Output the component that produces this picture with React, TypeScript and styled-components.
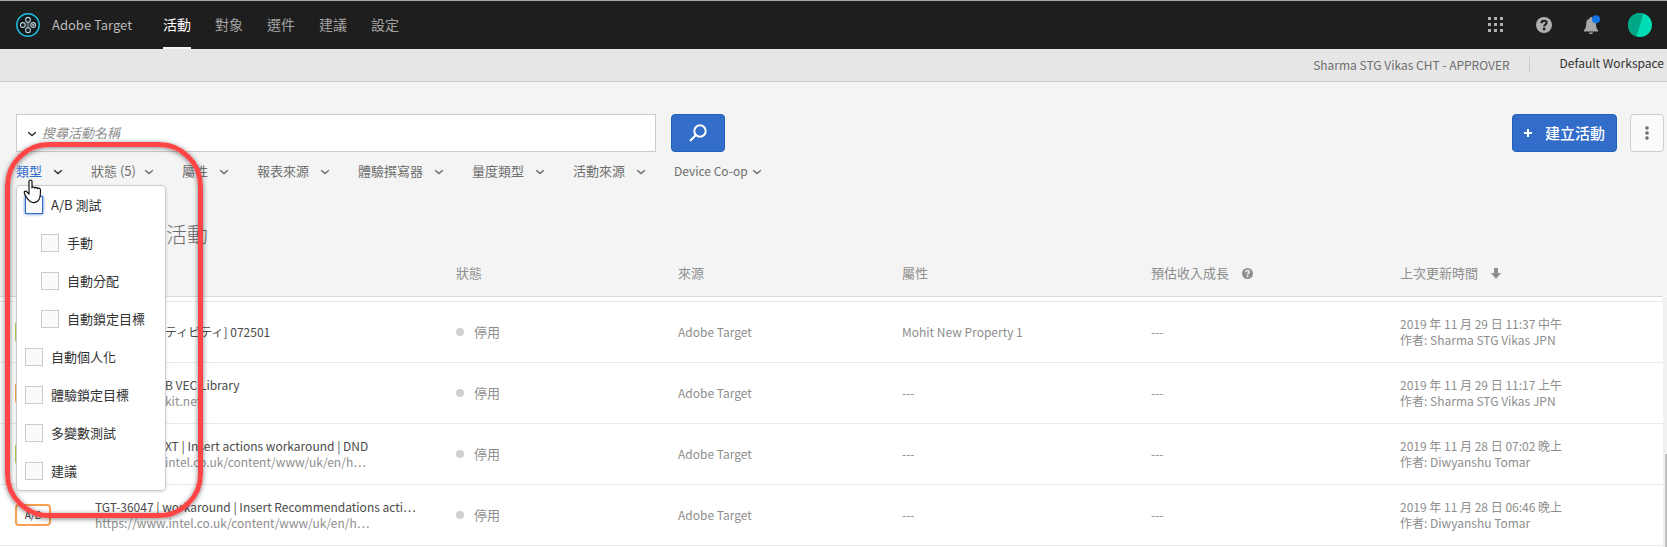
import React from "react";
import styled, { createGlobalStyle } from "styled-components";

const GlobalStyle = createGlobalStyle`
  *, *::before, *::after { box-sizing: border-box; }
  body {
    margin: 0;
    background: #fff;
    color: #4b4b4b;
    font-family: "Noto Sans CJK TC", "Noto Sans CJK JP", sans-serif;
    font-size: 13px;
    line-height: 16px;
  }
  button, input { font: inherit; color: inherit; }
`;

const Page = styled.div`
  position: relative;
  display: flex;
  flex-direction: column;
  min-height: 100vh;
  overflow: hidden;
`;

const TopBar = styled.header`
  display: flex;
  align-items: center;
  justify-content: space-between;
  height: 49px;
  padding: 0 15px 0 16px;
  border-top: 1px solid #a5a9a8;
  background: #1e1e1e;
`;

const Brand = styled.a`
  display: flex;
  align-items: center;
  gap: 12px;
  color: #b9b9b9;
  font-size: 13px;
  text-decoration: none;
`;

const TopLeft = styled.div`
  display: flex;
  align-items: center;
  height: 100%;
  gap: 31px;
`;

const MainNav = styled.nav`
  display: flex;
  height: 100%;
  gap: 24px;
`;

const NavLink = styled.a<{ $active?: boolean }>`
  display: flex;
  align-items: center;
  height: 100%;
  border-bottom: 2px solid ${(p) => (p.$active ? "#f4f4f4" : "transparent")};
  color: ${(p) => (p.$active ? "#fff" : "#a3a3a3")};
  font-size: 14px;
  text-decoration: none;
`;

const Tools = styled.div`
  display: flex;
  align-items: center;
  gap: 28px;
`;

const ToolIcons = styled.div`
  display: flex;
  align-items: center;
  gap: 32px;
`;

const IconButton = styled.button`
  display: flex;
  padding: 0;
  border: 0;
  background: none;
`;

const WorkspaceBar = styled.div`
  display: flex;
  align-items: center;
  justify-content: flex-end;
  height: 33px;
  padding-right: 3px;
  border-bottom: 1px solid #ccc;
  background: #e6e6e6;
  font-size: 12px;
`;

const Account = styled.span`
  padding-right: 19px;
  border-right: 1px solid #ccc;
  color: #6e6e6e;
`;

const Workspace = styled.span`
  padding: 0 0 4px 30px;
  color: #323232;
`;

const Controls = styled.main`
  display: flex;
  flex-direction: column;
  padding: 32px 3px 0 16px;
  background: #f4f4f4;
`;

const SearchRow = styled.form`
  display: flex;
  align-items: center;
  gap: 15px;
`;

const SearchBox = styled.label`
  display: flex;
  align-items: center;
  gap: 5px;
  flex: 0 1 640px;
  height: 38px;
  padding: 0 10px;
  border: 1px solid #ccc;
  background: #fff;
`;

const SearchInput = styled.input`
  flex: 1;
  min-width: 0;
  padding: 0;
  border: 0;
  outline: 0;
  background: none;
  &::placeholder {
    color: #8e8e8e;
    font-style: italic;
    opacity: 1;
  }
`;

const PrimaryButton = styled.button`
  display: flex;
  align-items: center;
  justify-content: center;
  gap: 13px;
  min-width: 54px;
  height: 38px;
  padding: 0 11px;
  border: 1px solid #2260bf;
  border-radius: 4px;
  background: #326dc9;
  color: #fff;
  font-size: 15px;
  font-weight: 500;
`;

const MoreButton = styled.button`
  display: flex;
  align-items: center;
  justify-content: center;
  width: 34px;
  height: 38px;
  padding: 0;
  border: 1px solid #ccc;
  border-radius: 4px;
  background: #fafafa;
`;

const PageActions = styled.div`
  display: flex;
  gap: 13px;
  margin-left: auto;
`;

const FilterRow = styled.div`
  display: flex;
  align-items: center;
  gap: 28px;
  height: 38px;
`;

const FilterItem = styled.div`
  position: relative;
`;

const FilterButton = styled.button<{ $open?: boolean; $gap: number; $small?: boolean }>`
  display: flex;
  align-items: center;
  gap: ${(p) => p.$gap}px;
  padding: 0;
  border: 0;
  background: none;
  color: ${(p) => (p.$open ? "#326dc9" : "#6e6e6e")};
  font-size: ${(p) => (p.$small ? "12px" : "13px")};
  white-space: nowrap;
`;

const Menu = styled.fieldset`
  position: absolute;
  z-index: 2;
  top: 22px;
  left: 0;
  width: 150px;
  height: 306px;
  margin: 0;
  padding: 0;
  border: 1px solid #ccc;
  border-radius: 4px;
  background: #fff;
  box-shadow: 0 1px 3px rgba(0, 0, 0, 0.15);
`;

const Option = styled.label<{ $sub?: boolean }>`
  display: flex;
  align-items: center;
  gap: 8px;
  height: 38px;
  padding-left: ${(p) => (p.$sub ? "24px" : "8px")};
  color: #323232;
`;

const Tick = styled.input<{ $focused?: boolean }>`
  appearance: none;
  width: 18px;
  height: 18px;
  margin: 0;
  border: 1px solid ${(p) => (p.$focused ? "#326dc9" : "#ccc")};
  background: #fafafa;
  box-shadow: ${(p) => (p.$focused ? "0 0 3px #326dc9" : "none")};
`;

const Heading = styled.h1`
  margin: 0;
  padding: 27px 0 3px 150px;
  color: #6e6e6e;
  font-size: 21px;
  font-weight: 300;
  line-height: 32px;
`;

const ListArea = styled.div`
  display: flex;
  flex: 1;
  background: linear-gradient(#f4f4f4 44px, #fff 44px);
`;

const Table = styled.table`
  flex: 1;
  align-self: flex-start;
  width: 100%;
  table-layout: fixed;
  border-spacing: 0;
  text-align: left;
`;

const HeadCell = styled.th`
  height: 45px;
  padding: 0 0 2px;
  border-bottom: 1px solid #dcdcdc;
  background: #f4f4f4;
  color: #8e8e8e;
  font-weight: 400;
`;

const HeadLabel = styled.span`
  display: inline-flex;
  align-items: center;
  gap: 13px;
`;

const Spacer = styled.td`
  height: 5px;
  padding: 0;
  border-bottom: 1px solid #eaeaea;
`;

const Cell = styled.td`
  height: 61px;
  padding: 0;
  border-bottom: 1px solid #eaeaea;
  color: #8e8e8e;
  font-size: 12px;
  white-space: nowrap;
`;

const NameLayout = styled.div`
  display: flex;
  align-items: center;
  gap: 44px;
  padding-left: 15px;
`;

const Badge = styled.span<{ $color: string }>`
  width: 36px;
  height: 22px;
  border: 2px solid ${(p) => p.$color};
  border-radius: 4px;
  color: #323232;
  font-size: 10px;
  line-height: 18px;
  text-align: center;
`;

const NameText = styled.div<{ $indent: number }>`
  padding-left: ${(p) => p.$indent}px;
`;

const Name = styled.div`
  color: #4b4b4b;
`;

const Status = styled.span`
  display: flex;
  align-items: center;
  gap: 10px;
  font-size: 13px;
  &::before {
    content: "";
    width: 8px;
    height: 8px;
    border-radius: 50%;
    background: #d0d0d0;
  }
`;

const ScrollTrack = styled.div`
  display: flex;
  align-items: flex-end;
  justify-content: flex-end;
  width: 4px;
  margin-top: 45px;
  background: #f1f1f1;
`;

const ScrollThumb = styled.div`
  width: 2px;
  height: 93px;
  background: #c1c1c1;
`;

const Callout = styled.div`
  position: absolute;
  z-index: 3;
  top: 142px;
  left: 5px;
  width: 198px;
  height: 376px;
  border: 5px solid #ff4545;
  border-radius: 44px;
  box-shadow: 0 1px 5px rgba(0, 0, 0, 0.5), inset 0 1px 5px rgba(0, 0, 0, 0.5);
  pointer-events: none;
`;

const Pointer = styled.svg`
  position: absolute;
  z-index: 4;
  top: 179px;
  left: 23px;
  pointer-events: none;
`;

const Chevron = ({ color = "#6e6e6e" }: { color?: string }) => (
  <svg width="10" height="8" viewBox="0 0 10 8" fill="none" aria-hidden="true">
    <path d="M1.2 3.200 5 6.600 8.800 3.200" stroke={color} strokeWidth="1.5" />
  </svg>
);

const Logo = () => (
  <svg width="24" height="24" viewBox="0 0 24 24" fill="none" aria-hidden="true">
    <circle cx="12" cy="12" r="11.2" fill="#12191b" stroke="#1fc0e0" strokeWidth="1.4" />
    <path d="M12 9v6" stroke="#5f6c70" strokeWidth="3" />
    <g stroke="#bcd0d6" strokeWidth="1.1">
      <circle cx="12" cy="6.8" r="2.4" />
      <circle cx="12" cy="17.200" r="2.4" />
      <circle cx="6.800" cy="12" r="2.4" />
      <circle cx="17.200" cy="12" r="2.4" />
    </g>
    <circle cx="17.200" cy="12" r="1.100" fill="#bcd0d6" />
  </svg>
);

const GridIcon = () => (
  <svg width="16" height="16" viewBox="0 0 16 16" fill="#b0b0b0" aria-hidden="true">
    {[0, 6, 12].map((y) => [0, 6, 12].map((x) => <rect key={`${x}-${y}`} x={x} y={y} width="3" height="3" />))}
  </svg>
);

const HelpIcon = ({ size, fill, mark }: { size: number; fill: string; mark: string }) => (
  <svg width={size} height={size} viewBox="0 0 16 16" aria-hidden="true">
    <circle cx="8" cy="8" r="8" fill={fill} />
    <path d="M5.4 6.2C5.500 4.500 6.600 3.700 8.100 3.700c1.500 0 2.500.8 2.500 2.100 0 1.700-2.400 1.700-2.400 3.600" fill="none" stroke={mark} strokeWidth="2.100" />
    <circle cx="8.100" cy="12" r="1.400" fill={mark} />
  </svg>
);

const BellIcon = () => (
  <svg width="16" height="20" viewBox="0 0 16 20" aria-hidden="true">
    <path d="M5.800 3.500c0-2 2.800-2 2.800 0C11 4.200 12 6 12 8.500c0 3.500.5 5.500 2 6.500v1.500H0V15c1.500-1 2.200-3 2.200-6.500C2.200 6 3.300 4.200 5.800 3.500z" fill="#a8a8a8" />
    <path d="M5 17.500h4c0 2-4 2-4 0z" fill="#a8a8a8" />
    <circle cx="12" cy="4.200" r="4" fill="#1473e6" />
  </svg>
);

const Avatar = () => (
  <svg width="24" height="24" viewBox="0 0 24 24" aria-hidden="true">
    <circle cx="12" cy="12" r="12" fill="#00dcb4" />
    <path d="M15.500.5A12 12 0 1 0 8.500 23.500z" fill="#00a787" />
  </svg>
);

const SearchIcon = () => (
  <svg width="18" height="18" viewBox="0 0 18 18" fill="none" stroke="#fff" strokeWidth="2" aria-hidden="true">
    <circle cx="11" cy="7" r="5.700" />
    <path d="M7 11 1 17" />
  </svg>
);

const DotsIcon = () => (
  <svg width="4" height="14" viewBox="0 0 4 14" fill="#6e6e6e" aria-hidden="true">
    {[2, 7, 12].map((y) => <circle key={y} cx="2" cy={y} r="1.800" />)}
  </svg>
);

const PlusIcon = () => (
  <svg width="8" height="8" viewBox="0 0 8 8" stroke="#fff" strokeWidth="2" aria-hidden="true">
    <path d="M4 0v8M0 4h8" />
  </svg>
);

const ArrowDown = () => (
  <svg width="10" height="11" viewBox="0 0 10 11" fill="#8e8e8e" aria-hidden="true">
    <path d="M3 0h4v5h3L5 11 0 5h3z" />
  </svg>
);

const nav = ["活動", "對象", "選件", "建議", "設定"];
const filters = [
  { label: "類型", gap: 11, open: true },
  { label: "狀態 (5)", gap: 8 },
  { label: "屬性", gap: 11 },
  { label: "報表來源", gap: 11 },
  { label: "體驗撰寫器", gap: 11 },
  { label: "量度類型", gap: 11 },
  { label: "活動來源", gap: 11 },
  { label: "Device Co-op", gap: 4, small: true },
];
const options = [
  { label: "A/B 測試" },
  { label: "手動", sub: true },
  { label: "自動分配", sub: true },
  { label: "自動鎖定目標", sub: true },
  { label: "自動個人化" },
  { label: "體驗鎖定目標" },
  { label: "多變數測試" },
  { label: "建議" },
];
const columns = [456, 222, 224, 249, 249, 263];
const rows = [
  { color: "#b5cc4e", indent: 70, name: "ティビティ] 072501", url: "", property: "Mohit New Property 1", date: "2019 年 11 月 29 日 11:37 中午", author: "Sharma STG Vikas JPN" },
  { color: "#f9a04c", indent: 70, name: "B VEC Library", url: "kit.net", property: "---", date: "2019 年 11 月 29 日 11:17 上午", author: "Sharma STG Vikas JPN" },
  { color: "#b5cc4e", indent: 70, name: "XT | Insert actions workaround | DND", url: "intel.co.uk/content/www/uk/en/h…", property: "---", date: "2019 年 11 月 28 日 07:02 晚上", author: "Diwyanshu Tomar" },
  { color: "#f9a04c", indent: 0, name: "TGT-36047 | workaround | Insert Recommendations acti…", url: "https://www.intel.co.uk/content/www/uk/en/h…", property: "---", date: "2019 年 11 月 28 日 06:46 晚上", author: "Diwyanshu Tomar" },
];

export default function App() {
  return (
    <Page>
      <GlobalStyle />
      <TopBar>
        <TopLeft>
          <Brand href="#"><Logo />Adobe Target</Brand>
          <MainNav>
            {nav.map((item, i) => <NavLink key={item} href="#" $active={i === 0}>{item}</NavLink>)}
          </MainNav>
        </TopLeft>
        <Tools>
          <ToolIcons>
            <IconButton aria-label="Apps"><GridIcon /></IconButton>
            <IconButton aria-label="Help"><HelpIcon size={16} fill="#b0b0b0" mark="#1e1e1e" /></IconButton>
            <IconButton aria-label="Notifications"><BellIcon /></IconButton>
          </ToolIcons>
          <IconButton aria-label="Profile"><Avatar /></IconButton>
        </Tools>
      </TopBar>
      <WorkspaceBar>
        <Account>Sharma STG Vikas CHT - APPROVER</Account>
        <Workspace>Default Workspace</Workspace>
      </WorkspaceBar>
      <Controls>
        <SearchRow>
          <SearchBox>
            <Chevron color="#323232" />
            <SearchInput type="text" placeholder="搜尋活動名稱" aria-label="搜尋活動名稱" />
          </SearchBox>
          <PrimaryButton type="button" aria-label="Search"><SearchIcon /></PrimaryButton>
          <PageActions>
            <PrimaryButton type="button"><PlusIcon />建立活動</PrimaryButton>
            <MoreButton type="button" aria-label="More"><DotsIcon /></MoreButton>
          </PageActions>
        </SearchRow>
        <FilterRow>
          {filters.map((f) => (
            <FilterItem key={f.label}>
              <FilterButton $open={f.open} $gap={f.gap} $small={f.small} aria-expanded={!!f.open}>
                {f.label}<Chevron color={f.open ? "#323232" : undefined} />
              </FilterButton>
              {f.open && (
                <Menu aria-label={f.label}>
                  {options.map((o, n) => (
                    <Option key={o.label} $sub={o.sub}>
                      <Tick type="checkbox" $focused={n === 0} />{o.label}
                    </Option>
                  ))}
                </Menu>
              )}
            </FilterItem>
          ))}
        </FilterRow>
        <Heading>活動</Heading>
      </Controls>
      <ListArea>
        <Table>
          <colgroup>{columns.map((w, i) => <col key={i} width={w} />)}</colgroup>
          <thead>
            <tr>
              <HeadCell />
              <HeadCell>狀態</HeadCell>
              <HeadCell>來源</HeadCell>
              <HeadCell>屬性</HeadCell>
              <HeadCell><HeadLabel>預估收入成長<HelpIcon size={11} fill="#8e8e8e" mark="#f4f4f4" /></HeadLabel></HeadCell>
              <HeadCell><HeadLabel>上次更新時間<ArrowDown /></HeadLabel></HeadCell>
            </tr>
          </thead>
          <tbody>
            <tr><Spacer colSpan={6} /></tr>
            {rows.map((r) => (
              <tr key={r.name}>
                <Cell>
                  <NameLayout>
                    <Badge $color={r.color}>A/B</Badge>
                    <NameText $indent={r.indent}>
                      <Name>{r.name}</Name>
                      {r.url && <div>{r.url}</div>}
                    </NameText>
                  </NameLayout>
                </Cell>
                <Cell><Status>停用</Status></Cell>
                <Cell>Adobe Target</Cell>
                <Cell>{r.property}</Cell>
                <Cell>---</Cell>
                <Cell>{r.date}<br />作者: {r.author}</Cell>
              </tr>
            ))}
          </tbody>
        </Table>
        <ScrollTrack><ScrollThumb /></ScrollTrack>
      </ListArea>
      <Callout />
      <Pointer width="20" height="26" viewBox="0 0 20 26" aria-hidden="true">
        <path d="M6 2.500c0-2 3-2 3 0V9c.3-1.500 2.700-1.300 2.800.2.500-1.300 2.500-1 2.700.5.700-1.200 3-.7 3 1.300 0 5 0 7-1.500 9.500C14.500 23 12 24 9.500 23.500 6 23 2 17 1.300 14c-.5-2 1.700-2.500 2.700-1l2 2z" fill="#fff" stroke="#111" strokeWidth="1.200" strokeLinejoin="round" />
      </Pointer>
    </Page>
  );
}
